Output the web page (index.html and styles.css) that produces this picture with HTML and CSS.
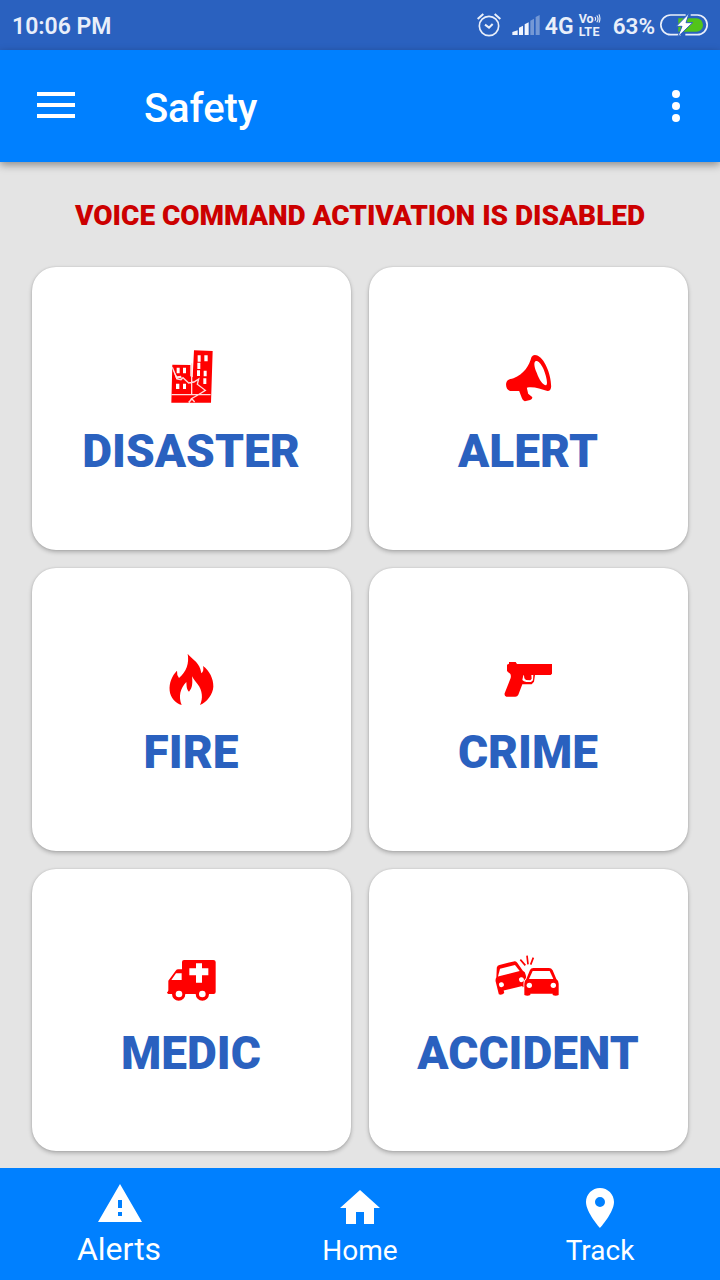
FILE: index.html
```html
<!DOCTYPE html>
<html lang="en">
<head>
<meta charset="utf-8">
<title>Safety</title>
<link rel="stylesheet" href="styles.css">
</head>
<body>
<div class="status">
  <span class="time">10:06 PM</span>
  <div class="indicators">
    <svg class="alarm" viewBox="0 0 72 72" fill="none" stroke="#e9effa" stroke-width="5"><circle cx="36" cy="39" r="29"/><path d="M24 35l12 9 11-11M2 18L19 3M53 3l17 15" stroke-width="6"/></svg>
    <svg class="signal" viewBox="0 0 84 60" fill="#f0f4fc"><path d="M1 60V51l16-5v14zM21 60V38l12-6v28zM38 60V28l12-6v38z"/><path fill="#fff" fill-opacity=".35" d="M55 60V17l11-6v49zM71 60V6l12-6v60z"/></svg>
    <span class="net">4G</span>
    <div class="volte"><div class="vo"><span>Vo</span><svg viewBox="0 0 18 24" fill="none" stroke="#e9effa" stroke-width="3"><path d="M2 8q4 5 0 10M7 4q7 9 0 18M13 1q5 11 0 22"/></svg></div><div class="lte">LTE</div></div>
    <span class="pct">63%</span>
    <svg class="battery" viewBox="0 0 144 72"><path d="M77 6H32a29 29 0 0 0 0 59H62M92 6h20a29 29 0 0 1 0 59H76" fill="none" stroke="#e9effa" stroke-width="5"/><path d="M55 16h54a20 20 0 0 1 0 40H55z" fill="#52c41a"/><path d="M88 0L49 40h17L53 72 98 29H78z" fill="#fff" stroke="#2a61bf" stroke-width="3"/></svg>
  </div>
</div>
<header class="appbar">
  <svg class="menu" viewBox="0 0 38 26" fill="#fff"><path d="M0 0h38v4H0zM0 11h38v4H0zM0 22h38v4H0z"/></svg>
  <h1>Safety</h1>
  <svg class="more" viewBox="0 0 8 32" fill="#fff"><circle cx="4" cy="4" r="4"/><circle cx="4" cy="16" r="4"/><circle cx="4" cy="28" r="4"/></svg>
</header>
<main>
  <p class="notice">VOICE COMMAND ACTIVATION IS DISABLED</p>
  <div class="grid">
    <section class="card">
      <svg class="icon" viewBox="0 0 192 192"><g transform="translate(-1 -15)"><path fill="red" d="M103 31l56 2-5 155H35l3-114 54 1v34l7 3z"/><g fill="#fff"><path d="M114 46h9v19h-9zM134 46h10v18h-10zM113 68h9v19h-9zM112 91h9v17h-9zM132 92h9v17h-9zM131 115h9v17h-9zM51 83h9v17h-9zM70 83h9v17h-9zM49 131h10v16H49zM70 131h9v16h-9z"/></g><path d="M38 82l14 35 12 2 6-6 17 16 16-3 14-9-4 16 24 18-22 14-20 11-7 13M96 70v94M35 164h118M87 187l10-10 8 9" fill="none" stroke="#ffdada" stroke-width="4"/><path d="M39 86l11 32 9-4 8 2-3-9-12 2z" fill="#ffe6e6"/></g></svg>
      <h2>DISASTER</h2>
    </section>
    <section class="card">
      <svg class="icon" viewBox="0 0 192 192"><g transform="translate(-1.5 0)" fill="red"><path fill-rule="evenodd" d="M105 36Q111 27 120 31C143 37 164 87 164 124Q164 138 153 138C132 132 112 124 91 128L95 146 107 156Q109 162 101 165L85 169Q79 168 76 159L68 138H48C34 140 27 128 29 115 31 104 39 103 51 100 82 87 98 63 105 36zM119 48C111 49 112 66 121 84 128 105 141 122 149 121 155 116 149 92 141 72 133 56 126 48 119 48z"/></g></svg>
      <h2>ALERT</h2>
    </section>
    <section class="card">
      <svg class="icon" viewBox="0 0 192 192"><g transform="translate(0 -3)"><path fill="red" d="M83 26C91 38 115 50 121 72L124 85Q133 78 129 63C148 76 161 102 160 125 159 147 141 171 120 180 130 161 127 136 113 118 107 110 100 102 96 94 98 113 98 128 87 140 79 132 80 122 79 111 60 131 55 155 65 180 46 175 31 157 29 137 27 113 36 92 51 77Q50 91 57 99C80 79 88 54 83 26z"/></g></svg>
      <h2>FIRE</h2>
    </section>
    <section class="card">
      <svg class="icon" viewBox="0 0 192 192"><g transform="translate(-3 12)"><path fill="red" fill-rule="evenodd" d="M39 36h20l4 6h105v29l-4 4h-47l-3 20-7 8H79L67 134q-3 6-9 6H31q-7-3-5-10l18-46q3-13-8-17l-3-5V44l6-3zM82 76l-3 14q4 5 12 6h14l6-5 1-16h-6l1 11-4 5-13-1-5-5-1-9z"/></g></svg>
      <h2>CRIME</h2>
    </section>
    <section class="card">
      <svg class="icon" viewBox="0 0 192 192"><g transform="translate(0 9)"><path fill="red" d="M66 36q0-6 6-6h88q7 0 7 6v90q0 6-6 6h-14a20 20 0 0 1-40 0H76a20 20 0 0 1-40 0H25q-4-2-4-5 4-2 4-6V92l22-30q3-4 8-4h11z"/><path fill="#fff" d="M108 40h18v15h19v21h-19v22h-18V76H88V55h20zM48 70h17v20H34z"/><g fill="#fff" stroke="red" stroke-width="8"><circle cx="57" cy="132" r="14"/><circle cx="127" cy="132" r="14"/></g></g></svg>
      <h2>MEDIC</h2>
    </section>
    <section class="card">
      <svg class="icon" viewBox="0 0 192 192"><g transform="translate(-27 9)"><g transform="translate(-9 -2) rotate(-14 68 82) scale(1.05)"><path fill="red" d="M41 45q3-5 9-5h42q6 0 9 6l10 26q6 5 5 13v33H99v-4H44v7q-8 5-16 0V85q0-8 5-13z"/><path fill="#fff" d="M49 51h44l9 20H38z"/><circle cx="42" cy="96" r="7" fill="#fff"/><circle cx="101" cy="96" r="7" fill="#fff"/></g><path fill="red" stroke="#fff" stroke-width="5" paint-order="stroke" d="M126 60q3-6 10-6h47q7 0 11 7l11 26q7 5 7 14v34q-9 4-18 0v-4h-67v4q-9 4-18 0v-34q0-9 6-14z"/><path fill="#fff" d="M134 63h51l11 24h-73z"/><circle cx="124" cy="106" r="8" fill="#fff"/><circle cx="196" cy="106" r="8" fill="#fff"/><path d="M97 29l15 17M117 17l3 26M136 23l-8 21" stroke="red" stroke-width="5"/></g></svg>
      <h2>ACCIDENT</h2>
    </section>
  </div>
</main>
<nav class="tabs">
  <a class="tab active"><svg viewBox="0 0 24 24" fill="#fff"><path d="M1 21h22L12 2 1 21zm12-3h-2v-2h2v2zm0-4h-2v-4h2v4z"/></svg><span>Alerts</span></a>
  <a class="tab"><svg viewBox="0 0 24 24" fill="#fff"><path d="M10 20v-6h4v6h5v-8h3L12 3 2 12h3v8z"/></svg><span>Home</span></a>
  <a class="tab"><svg viewBox="0 0 24 24" fill="#fff"><path d="M12 2C8.130 2 5 5.130 5 9c0 5.250 7 13 7 13s7-7.750 7-13c0-3.870-3.130-7-7-7zm0 9.500a2.500 2.500 0 0 1 0-5 2.500 2.500 0 0 1 0 5z"/></svg><span>Track</span></a>
</nav>
</body>
</html>
```
FILE: styles.css
```css
* { box-sizing: border-box; }
body { margin: 0; width: 720px; height: 1280px; display: flex; flex-direction: column; overflow: hidden; background: #e4e4e4; font-family: Roboto, sans-serif; color: #fff; }
h1, h2, p { margin: 0; white-space: nowrap; }
svg { display: block; flex: none; }
.status { height: 50px; flex: none; display: flex; justify-content: space-between; padding: 0 12px; background: #2a61bf; color: #e9effa; font-size: 23px; font-weight: 600; line-height: 53px; }
.indicators { display: flex; align-items: flex-start; }
.alarm { width: 24px; height: 24px; margin: 13px 11px 0 0; }
.signal { width: 28px; height: 20px; margin: 15px 5px 0 0; }
.volte { width: 23px; margin: 12px 11px 0 5px; font: 700 12.5px/12px Roboto, sans-serif; }
.vo { display: flex; height: 12px; line-height: 14px; }
.vo svg { width: 7px; height: 9px; margin-top: 2px; }
.lte { line-height: 15px; letter-spacing: .3px; }
.pct { font-size: 22.5px; }
.battery { width: 48px; height: 24px; margin: 13px 0 0 5px; }
.appbar { height: 112px; flex: none; display: flex; align-items: center; padding: 0 40px 0 37px; background: #0080ff; box-shadow: 0 3px 8px rgba(0,0,0,.38); }
.menu { width: 38px; height: 26px; margin-top: -2px; }
h1 { flex: 1; margin: 6px 0 0 69px; font-size: 40px; line-height: 48px; font-weight: 500; letter-spacing: -.1px; }
.more { width: 8px; height: 32px; }
main { flex: 1; padding: 38px 32px 0; }
.notice { height: 32px; margin-bottom: 35px; text-align: center; color: #c00; font-size: 28px; line-height: 32px; font-weight: 860; letter-spacing: -.03px; }
.grid { display: grid; grid-template-columns: 319px 319px; grid-template-rows: 283px 283px 282px; gap: 18px; }
.card { display: flex; flex-direction: column; align-items: center; padding-top: 78px; border-radius: 24px; background: #fff; box-shadow: 0 2px 4px rgba(0,0,0,.25), 0 0 2px rgba(0,0,0,.13); }
.icon { width: 64px; height: 64px; overflow: visible; }
h2 { margin: 15px 1px 0 0; color: #2a61bf; font-size: 46px; line-height: 54px; font-weight: 870; }
.tabs { height: 112px; flex: none; display: grid; grid-template-columns: repeat(3, 1fr); background: #0080ff; }
.tab { display: flex; flex-direction: column; align-items: center; padding-top: 16px; font-size: 28px; line-height: 38px; }
.tab svg { width: 48px; height: 48px; }
.tab.active { padding-top: 12px; font-size: 32px; line-height: 42px; }
.tab.active span { margin-right: 2px; }
```
